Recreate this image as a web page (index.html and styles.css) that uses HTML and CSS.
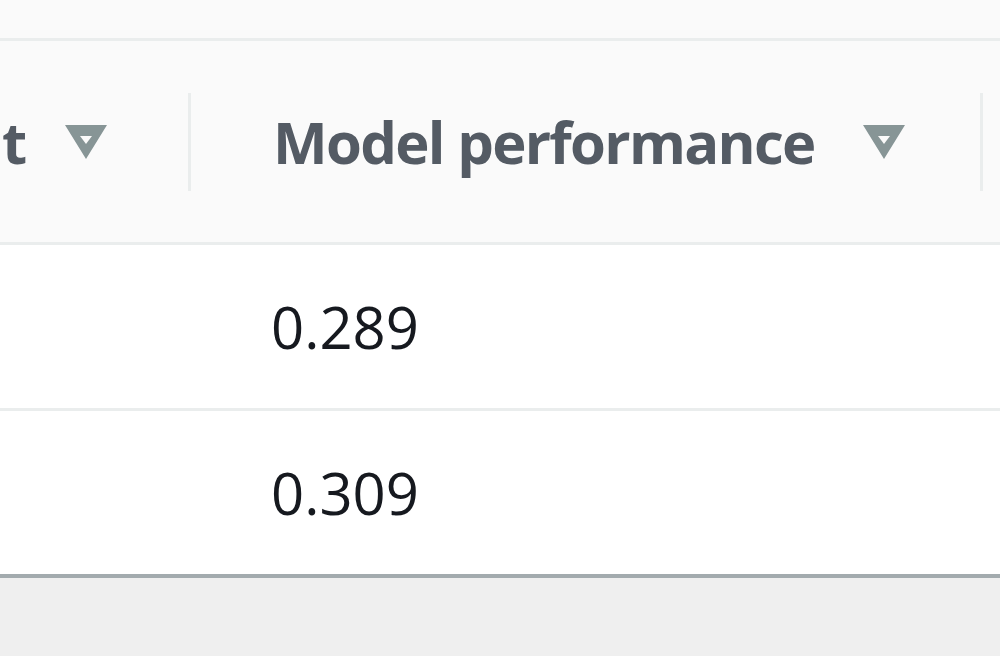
FILE: index.html
```html
<!DOCTYPE html>
<html lang="en">
<head>
<meta charset="utf-8">
<title>Table</title>
<link rel="stylesheet" href="styles.css">
</head>
<body>
<div class="top"></div>
<div class="table">
  <div class="row head">
    <div class="cell c1">
      <span class="label cut">t</span>
      <svg class="sort" viewBox="0 0 42 34" width="42" height="34"><path fill-rule="evenodd" d="M0 0H42L21 34ZM15 11L21 19L27 11Z"/></svg>
      <span class="grow"></span>
      <span class="divider"></span>
    </div>
    <div class="cell c2">
      <span class="label">Model performance</span>
      <svg class="sort" viewBox="0 0 42 34" width="42" height="34"><path fill-rule="evenodd" d="M0 0H42L21 34ZM15 11L21 19L27 11Z"/></svg>
      <span class="grow"></span>
      <span class="divider"></span>
    </div>
    <div class="cell c3"></div>
  </div>
  <div class="row body">
    <div class="cell c1"></div>
    <div class="cell c2"><span class="value">0.289</span></div>
    <div class="cell c3"></div>
  </div>
  <div class="row body last">
    <div class="cell c1"></div>
    <div class="cell c2"><span class="value">0.309</span></div>
    <div class="cell c3"></div>
  </div>
</div>
<div class="footer"></div>
</body>
</html>
```
FILE: styles.css
```css
html, body {
  margin: 0;
  padding: 0;
  height: 100%;
  overflow: hidden;
  background: #efefef;
  font-family: "Open Sans", "Liberation Sans", sans-serif;
}
.top {
  height: 38px;
  background: #fafafa;
  border-bottom: 3px solid #eaeded;
}
.table {
  display: flex;
  flex-direction: column;
}
.row {
  display: grid;
  grid-template-columns: 191px 792px 1fr;
}
.head {
  height: 201px;
  background: #fafafa;
  border-bottom: 3px solid #eaeded;
}
.body {
  height: 163px;
  background: #ffffff;
  border-bottom: 3px solid #eaeded;
}
.body.last {
  border-bottom: 4px solid #a3abae;
}
.cell {
  display: flex;
  align-items: center;
  min-width: 0;
}
.head .cell.c1 {
  padding-left: 0;
}
.head .cell.c2 {
  padding-left: 82px;
}
.label {
  font-size: 58px;
  font-weight: 700;
  color: #545b64;
  white-space: nowrap;
  line-height: 1;
  letter-spacing: -1.7px;
}
.label.cut {
  margin-left: 2px;
}
.sort {
  flex: none;
  fill: #879596;
}
.c1 .sort {
  margin-left: 40px;
}
.c2 .sort {
  margin-left: 48px;
}
.grow {
  flex: 1;
}
.divider {
  flex: none;
  width: 3px;
  height: 98px;
  background: #eaeded;
}
.body .cell.c2 {
  padding-left: 80px;
}
.value {
  font-size: 58px;
  color: #16191f;
  line-height: 1;
}
.footer {
  height: 100px;
}
```
